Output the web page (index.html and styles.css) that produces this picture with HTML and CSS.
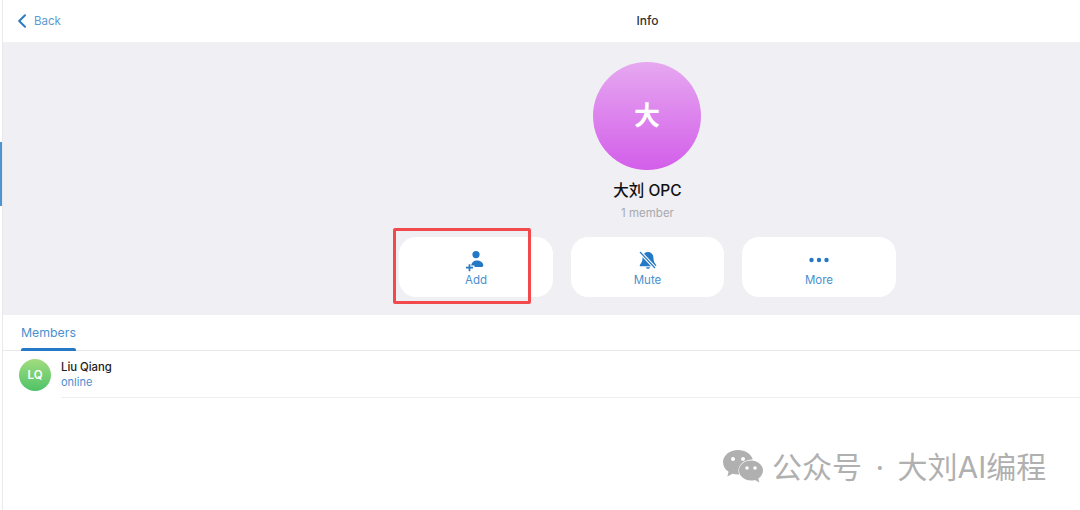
FILE: index.html
```html
<!DOCTYPE html>
<html>
<head>
    <meta charset="UTF-8">
    <title>Info</title>
    <link rel="stylesheet" href="styles.css">
</head>
<body>
    <div class="app">
        <div class="rail"><div class="rail-mark"></div></div>
        <div class="main">
            <div class="topbar">
                <a class="back">
                    <svg width="10" height="14" viewBox="0 0 10 14"><path d="M8 1.2 2.2 7 8 12.8" fill="none" stroke="#2b7cc4" stroke-width="2" stroke-linecap="round" stroke-linejoin="round"/></svg>
                    <span>Back</span>
                </a>
                <div class="title">Info</div>
            </div>

            <div class="profile">
                <div class="avatar">大</div>
                <div class="name">大刘 OPC</div>
                <div class="count">1 member</div>
                <div class="actions">
                    <div class="action">
                        <svg width="20" height="22" viewBox="0 0 20 22">
                            <circle cx="10" cy="4.600" r="3.600" fill="#2578c6"/>
                            <path d="M5 15.500c1-3 3-4.900 5.500-4.900 3.500 0 6.800 2 6.800 4.600 0 1.200-.7 1.800-1.800 1.800H8.500v-1.500z" fill="#2578c6"/>
                            <path d="M0 17.700h7M3.500 14.200v7" fill="none" stroke="#2578c6" stroke-width="1.700"/>
                        </svg>
                        <span>Add</span>
                    </div>
                    <div class="action">
                        <svg width="20" height="22" viewBox="0 0 20 22">
                            <path d="M10 2c3.400 0 5.400 2.600 5.400 5.800 0 3 1 5.200 2.600 6.900.6.700.2 1.600-.8 1.600H2.800c-1 0-1.400-.9-.8-1.600 1.600-1.700 2.600-3.900 2.600-6.900C4.600 4.600 6.600 2 10 2z" fill="#2578c6"/>
                            <path d="M8 17.200h4c-.3 1-1 1.500-2 1.500s-1.700-.5-2-1.500z" fill="#2578c6"/>
                            <path d="M3 3 17 18" stroke="#fff" stroke-width="3.400" fill="none"/>
                            <path d="M2 2 17 18" stroke="#2578c6" stroke-width="1.200" fill="none"/>
                        </svg>
                        <span>Mute</span>
                    </div>
                    <div class="action">
                        <svg width="20" height="22" viewBox="0 0 20 22">
                            <circle cx="2.500" cy="10" r="2.200" fill="#2578c6"/>
                            <circle cx="10" cy="10" r="2.200" fill="#2578c6"/>
                            <circle cx="17.500" cy="10" r="2.200" fill="#2578c6"/>
                        </svg>
                        <span>More</span>
                    </div>
                </div>
                <div class="highlight"></div>
            </div>

            <div class="tabs">
                <div class="tab">Members</div>
            </div>

            <div class="member">
                <div class="member-avatar">LQ</div>
                <div class="member-info">
                    <div class="member-name">Liu Qiang</div>
                    <div class="member-status">online</div>
                </div>
            </div>
        </div>
    </div>

    <div class="watermark">
        <svg width="42" height="36" viewBox="0 0 42 36">
            <path d="M16 1C7.700 1 1 6.500 1 13.300c0 3.900 2.200 7.300 5.600 9.500L5.300 27.500l5.300-2.700c1.700.5 3.500.8 5.400.8h1.300c-.5-1.200-.8-2.500-.8-3.900 0-6.200 6-11.200 13.500-11.200h.8C29.300 5 23.200 1 16 1z" fill="#b0b0b0"/>
            <path d="M41 21.500c0-5.500-5.500-10-12-10s-12 4.500-12 10 5.500 10 12 10c1.400 0 2.700-.2 4-.6l4.400 2.600-1.100-4c2.900-1.900 4.700-4.800 4.700-8z" fill="#b0b0b0"/>
            <circle cx="11" cy="10" r="2" fill="#fff"/>
            <circle cx="21" cy="10" r="2" fill="#fff"/>
            <circle cx="25" cy="19" r="1.800" fill="#fff"/>
            <circle cx="33" cy="19" r="1.800" fill="#fff"/>
        </svg>
        <span>公众号 · 大刘AI编程</span>
    </div>
</body>
</html>
```

FILE: styles.css
```css
html, body { margin: 0; padding: 0; }
body {
    width: 1080px;
    height: 510px;
    overflow: hidden;
    position: relative;
    background: #fff;
    font-family: Inter, "Liberation Sans", "Noto Sans CJK SC", sans-serif;
}

.app { display: flex; height: 510px; }

.rail { width: 2px; padding-top: 142px; border-right: 1px solid #e9e9ec; }
.rail-mark { height: 64px; background: #4c94d2; }

.main { flex: 1; min-width: 0; }

.topbar {
    display: grid;
    grid-template-columns: 212px 1fr;
    align-items: center;
    height: 42px;
}
.back {
    display: flex;
    align-items: center;
    gap: 7px;
    padding-left: 14px;
    font-size: 11.500px;
    color: #5b9bd3;
}
.title { padding-bottom: 2px; text-align: center; font-size: 12px; font-weight: 500; color: #333; }

.profile {
    position: relative;
    display: flex;
    flex-direction: column;
    align-items: center;
    height: 273px;
    box-sizing: border-box;
    padding: 20px 0 0 212px;
    background: #efeff4;
}
.avatar {
    width: 108px;
    height: 108px;
    margin-left: -1px;
    border-radius: 50%;
    background: linear-gradient(#e6a8f0, #d35eea);
    color: #fff;
    font-size: 26px;
    font-weight: 700;
    line-height: 108px;
    text-align: center;
}
.name { margin-top: 11px; font-size: 15.500px; line-height: 20px; font-weight: 500; color: #111; }
.count { margin-top: 4px; font-size: 11.500px; line-height: 16px; color: #a9a9ad; }

.actions { display: flex; gap: 18px; margin-top: 16px; }
.action {
    display: flex;
    flex-direction: column;
    align-items: center;
    width: 153.500px;
    height: 60px;
    box-sizing: border-box;
    padding-top: 13px;
    border-radius: 17px;
    background: #fff;
    color: #4a8fce;
    font-size: 11.500px;
    line-height: 14px;
}
.action svg { margin-bottom: 1px; }

.highlight {
    position: absolute;
    left: 390px;
    top: 186px;
    width: 132px;
    height: 70px;
    border: 3px solid #f2494d;
    border-radius: 2px;
}

.tabs { height: 36px; box-sizing: border-box; padding-left: 18px; border-bottom: 1px solid #e8e8ea; }
.tab {
    position: relative;
    display: inline-block;
    width: 55px;
    font-size: 12.300px;
    line-height: 35px;
    color: #4a8fce;
}
.tab::after {
    content: "";
    position: absolute;
    left: 0;
    right: 0;
    bottom: -1px;
    height: 3px;
    border-radius: 2px 2px 0 0;
    background: #2578c6;
}

.member { display: flex; gap: 10px; padding: 8px 0 0 16px; }
.member-avatar {
    flex: none;
    width: 32px;
    height: 32px;
    border-radius: 50%;
    background: linear-gradient(#a2dd7e, #4fc268);
    color: #fff;
    font-size: 11.500px;
    font-weight: 600;
    line-height: 32px;
    text-align: center;
}
.member-info { flex: 1; height: 37px; padding-top: 1px; border-bottom: 1px solid #eeeeef; }
.member-name { font-size: 11.300px; line-height: 15px; font-weight: 500; color: #222; }
.member-status { font-size: 11px; line-height: 15px; color: #4a8fce; }

.watermark {
    position: absolute;
    left: 722px;
    top: 449px;
    display: flex;
    align-items: center;
    gap: 8px;
    color: #b0b0b0;
    font-size: 30px;
    word-spacing: 5px;
    line-height: 36px;
    white-space: nowrap;
}
```
